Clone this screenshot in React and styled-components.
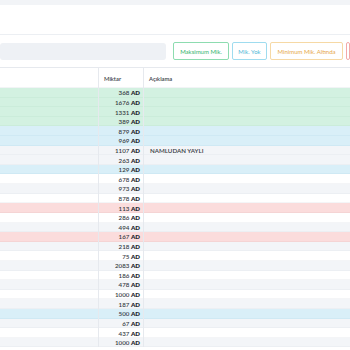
import React from "react";
import styled, { createGlobalStyle } from "styled-components";

const Global = createGlobalStyle`
  html, body { margin: 0; padding: 0; background: #f2f4f7; overflow: hidden; }
  body { font-family: "Lato", "Open Sans", sans-serif; color: #2b2f36; }
`;

const Page = styled.div`
  width: 350px;
  height: 350px;
  padding-top: 5px;
  box-sizing: border-box;
  overflow: hidden;
`;

const Card = styled.div`
  background: #fff;
  height: 100%;
  display: flex;
  flex-direction: column;
`;

const TitleBar = styled.div`
  height: 29px;
  border-bottom: 1px solid #eceff3;
  flex-shrink: 0;
`;

const Toolbar = styled.div`
  display: flex;
  align-items: center;
  gap: 3px;
  padding: 7px 0 7px 0;
  height: 33px;
  box-sizing: border-box;
  border-bottom: 1px solid #e6e9ee;
  flex-shrink: 0;
  overflow: hidden;
`;

const Search = styled.div`
  width: 166px;
  height: 17px;
  background: #eef1f5;
  border-radius: 3px;
  margin-right: 4px;
  flex-shrink: 0;
`;

const FilterBtn = styled.div`
  width: ${(p) => p.$w}px;
  height: 18px;
  box-sizing: border-box;
  border: 1px solid ${(p) => p.$c};
  color: ${(p) => p.$t};
  border-radius: 2px;
  font-size: 6px;
  display: flex;
  align-items: center;
  justify-content: center;
  white-space: nowrap;
  flex-shrink: 0;
  background: #fff;
`;

const Table = styled.div`
  display: flex;
  flex-direction: column;
`;

const Row = styled.div`
  display: grid;
  grid-template-columns: 99px 45px 1fr;
  height: ${(p) => (p.$head ? "20px" : "9.62px")};
  background: ${(p) => p.$bg};
  box-shadow: inset 0 -0.6px 0 ${(p) => p.$line || "#e3e7ec"};
`;

const Cell = styled.div`
  display: flex;
  align-items: center;
  justify-content: ${(p) => (p.$right ? "flex-end" : "flex-start")};
  padding: ${(p) => (p.$right ? "0 3px 0 0" : "0 0 0 6px")};
  font-size: 6.2px;
  font-weight: 600;
  color: #353a42;
  border-right: ${(p) => (p.$br ? "1px solid #e6e9ee" : "none")};
  white-space: nowrap;
  overflow: hidden;
`;

const HeadCell = styled(Cell)`
  font-size: 5.8px;
  font-weight: 600;
  padding-left: 5px;
  color: #3a3f47;
`;

const Unit = styled.b`
  font-weight: 800;
  color: #262a30;
  margin-left: 1.5px;
`;

const colors = {
  g: { bg: "#d3f1e1", line: "#c3e7d4" },
  b: { bg: "#d9eff8", line: "#c6e4ef" },
  r: { bg: "#fbdcdc", line: "#f0cccc" },
  s: { bg: "#f3f5f8", line: "#e6e9ee" },
  w: { bg: "#ffffff", line: "#e9ecf0" },
};

const rows = [
  ["368", "g"], ["1676", "g"], ["1331", "g"], ["389", "g"],
  ["879", "b"], ["969", "b"], ["1107", "s", "NAMLUDAN YAYLI"], ["263", "s"],
  ["129", "b"], ["678", "w"], ["973", "s"], ["878", "w"],
  ["113", "r"], ["286", "w"], ["494", "s"], ["167", "r"],
  ["218", "s"], ["75", "w"], ["2083", "s"], ["186", "w"],
  ["478", "s"], ["1000", "w"], ["187", "s"], ["500", "b"],
  ["67", "s"], ["437", "w"], ["1000", "s"],
];

export default function App() {
  return (
    <Page>
      <Global />
      <Card>
        <TitleBar />
        <Toolbar>
          <Search />
          <FilterBtn $w={56} $c="#8ddcb0" $t="#33b36a">Maksimum Mik.</FilterBtn>
          <FilterBtn $w={35} $c="#9fdcef" $t="#53b6d6">Mik. Yok</FilterBtn>
          <FilterBtn $w={73} $c="#f6d9a5" $t="#e6a84a">Minimum Mik. Altında</FilterBtn>
          <FilterBtn $w={4} $c="#f3a9a9" $t="#e06a6a" />
        </Toolbar>
        <Table>
          <Row $head $bg="#fff" $line="#e6e9ee">
            <HeadCell $br />
            <HeadCell $br>Miktar</HeadCell>
            <HeadCell>Açıklama</HeadCell>
          </Row>
          {rows.map(([n, c, d], i) => (
            <Row key={i} $bg={colors[c].bg} $line={colors[c].line}>
              <Cell $br />
              <Cell $right $br>
                {n}
                <Unit>AD</Unit>
              </Cell>
              <Cell>{d || ""}</Cell>
            </Row>
          ))}
        </Table>
      </Card>
    </Page>
  );
}
